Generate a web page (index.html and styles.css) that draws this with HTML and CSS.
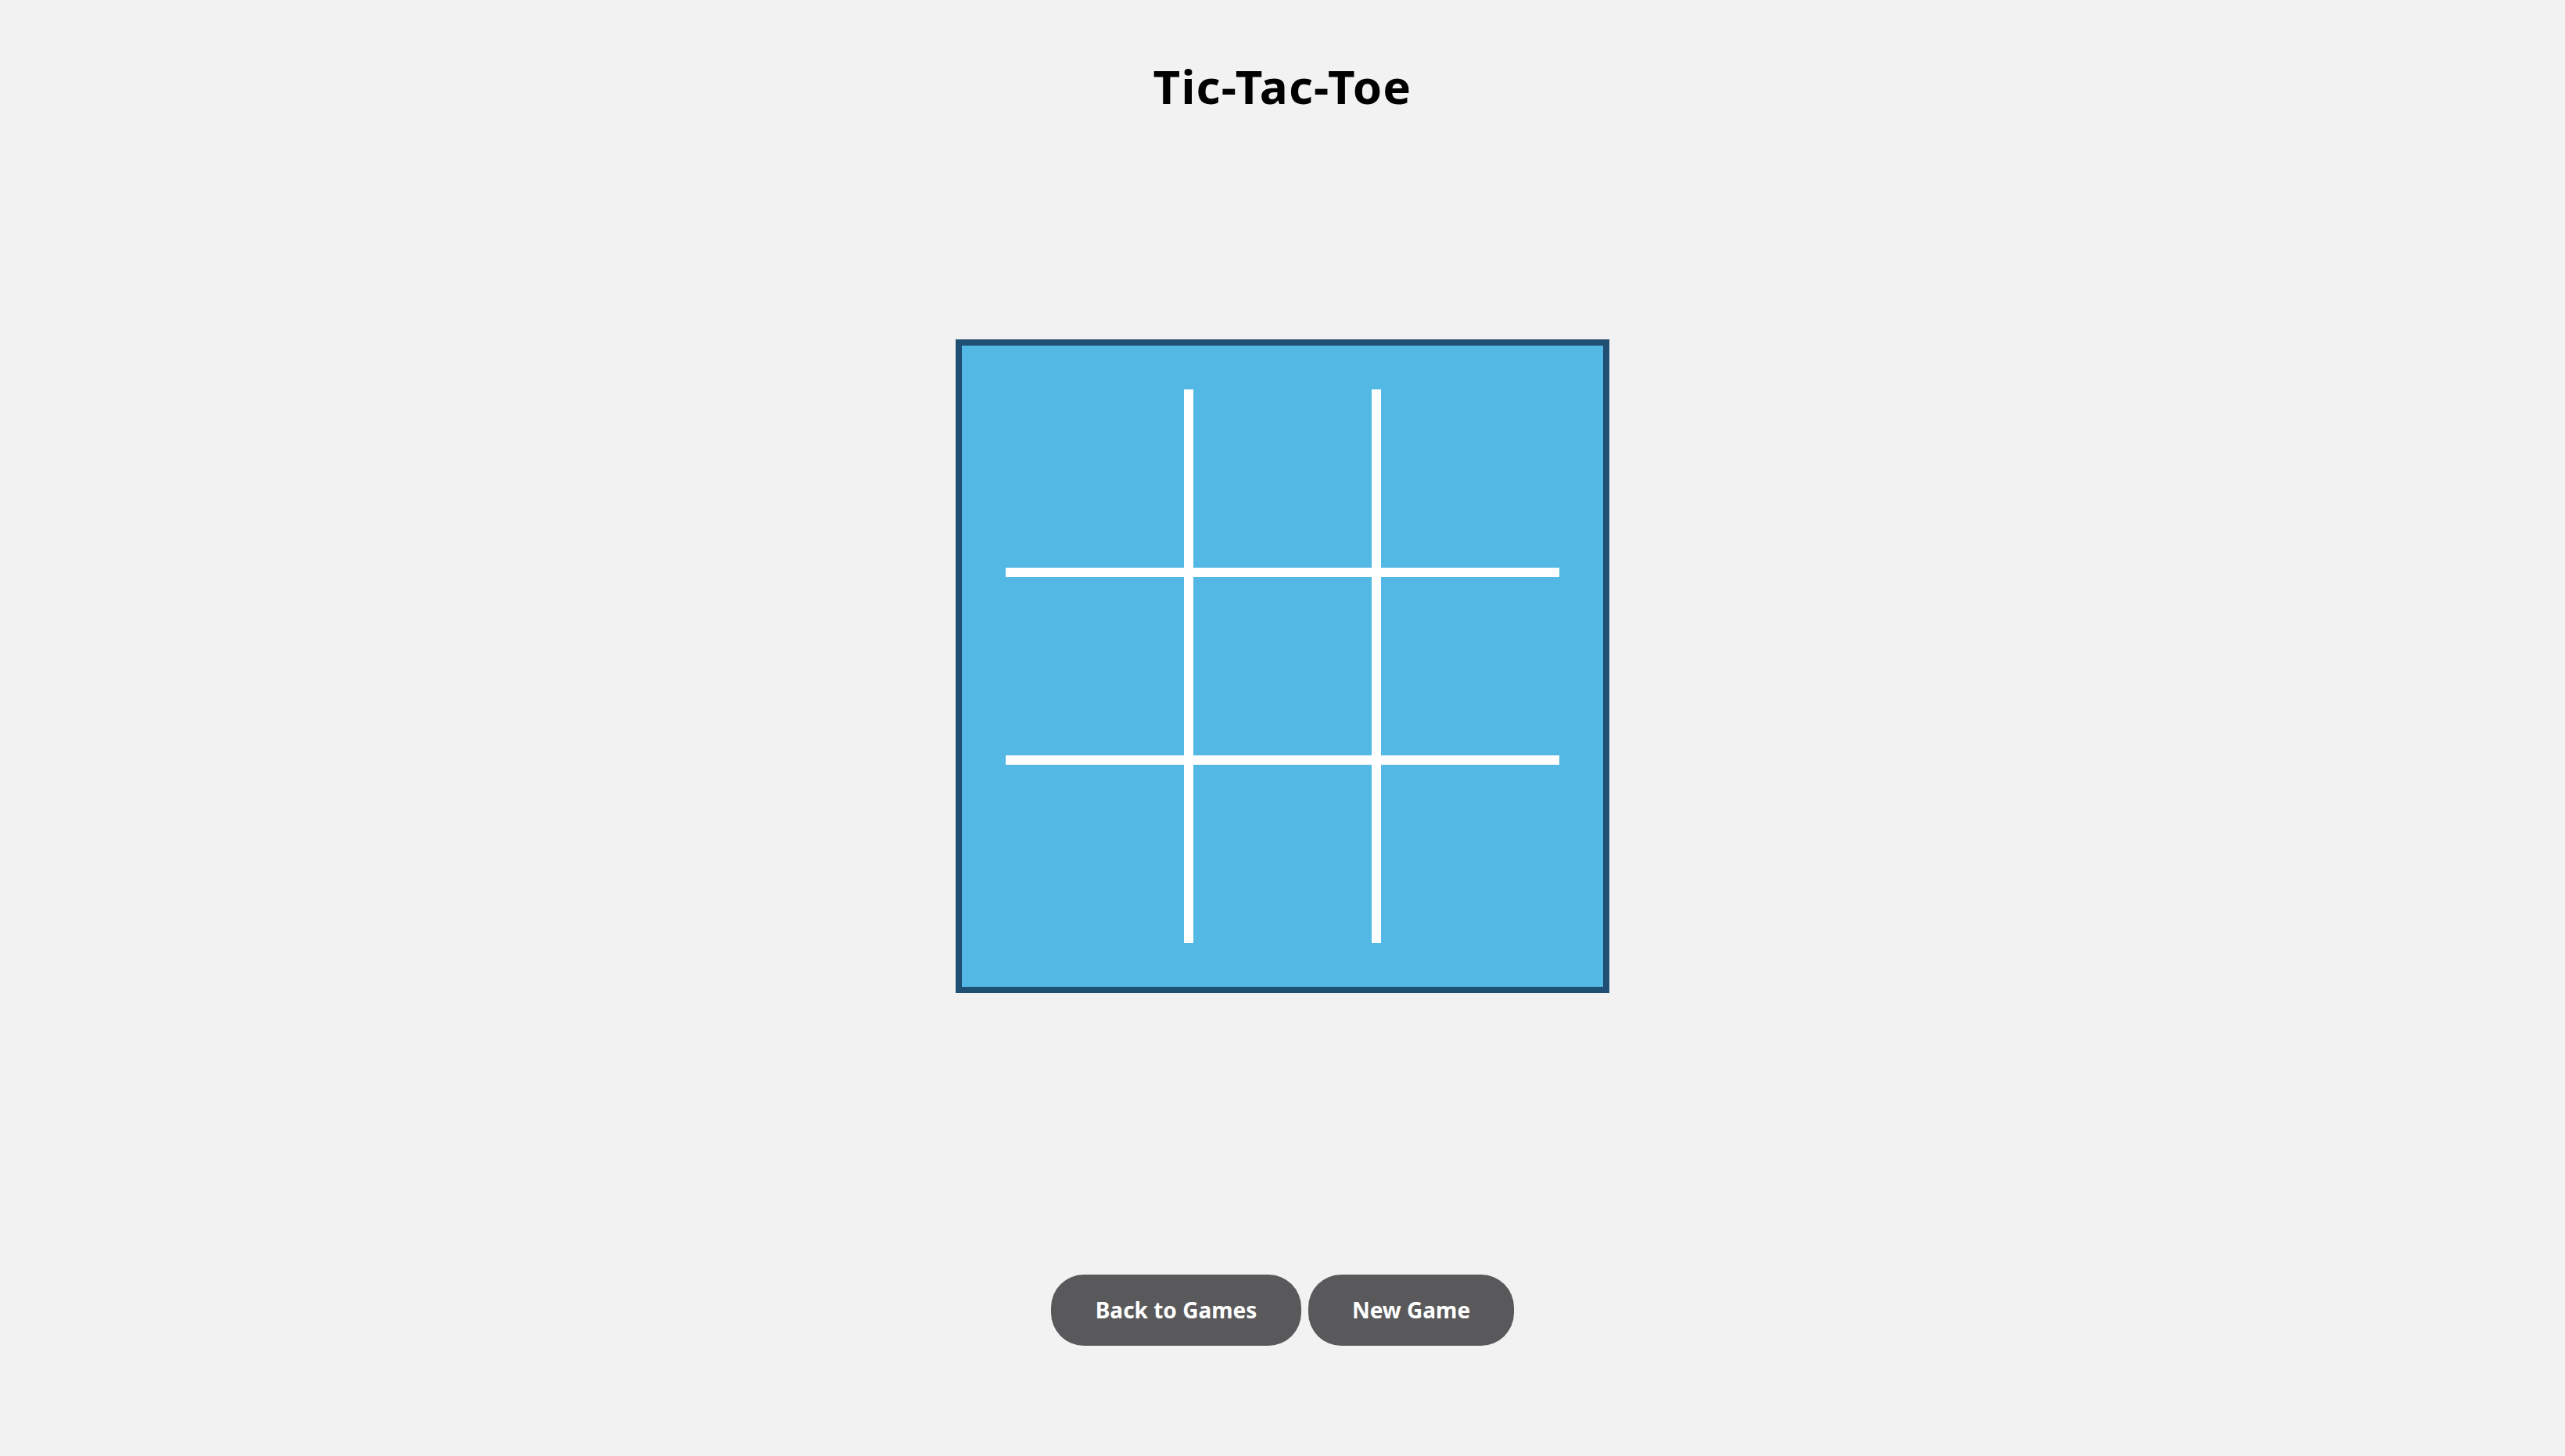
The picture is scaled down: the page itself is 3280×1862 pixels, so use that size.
FILE: index.html
```html
<!DOCTYPE html>
<html lang="en">
<head>
<meta charset="utf-8">
<title>Tic-Tac-Toe</title>
<link rel="stylesheet" href="styles.css">
</head>
<body>
<main class="page">
  <h1 class="title">Tic-Tac-Toe</h1>
  <div class="board">
    <div class="grid">
      <div class="cell"></div><div class="cell"></div><div class="cell"></div>
      <div class="cell"></div><div class="cell"></div><div class="cell"></div>
      <div class="cell"></div><div class="cell"></div><div class="cell"></div>
    </div>
  </div>
  <div class="actions">
    <button class="btn btn-back">Back to Games</button>
    <button class="btn btn-new">New Game</button>
  </div>
</main>
</body>
</html>
```

FILE: styles.css
```css
html, body {
  margin: 0;
  padding: 0;
  background: #f2f2f2;
}

.page {
  display: flex;
  flex-direction: column;
  align-items: center;
  padding-top: 70px;
  font-family: "Noto Sans", "Open Sans", sans-serif;
}

.title {
  margin: 0;
  font-size: 60px;
  line-height: 80px;
  font-weight: 700;
  letter-spacing: 1.2px;
  color: #000;
}

.board {
  margin-top: 284px;
  box-sizing: border-box;
  width: 836px;
  height: 836px;
  border: 8px solid #1f4f73;
  background: #53b9e4;
  padding: 56px;
}

.grid {
  display: grid;
  grid-template-columns: repeat(3, 228px);
  grid-template-rows: repeat(3, 228px);
  gap: 12px;
  background: #ffffff;
}

.cell {
  background: #53b9e4;
}

.actions {
  margin-top: 360px;
  display: flex;
  gap: 9px;
}

.btn {
  height: 91px;
  border: none;
  border-radius: 42px;
  background: #59595b;
  color: #ffffff;
  font-family: "Noto Sans", "Open Sans", sans-serif;
  font-weight: 700;
  font-size: 28px;
  line-height: 91px;
  padding: 0;
  cursor: pointer;
}

.btn-back {
  width: 320px;
}

.btn-new {
  width: 263px;
}
```
